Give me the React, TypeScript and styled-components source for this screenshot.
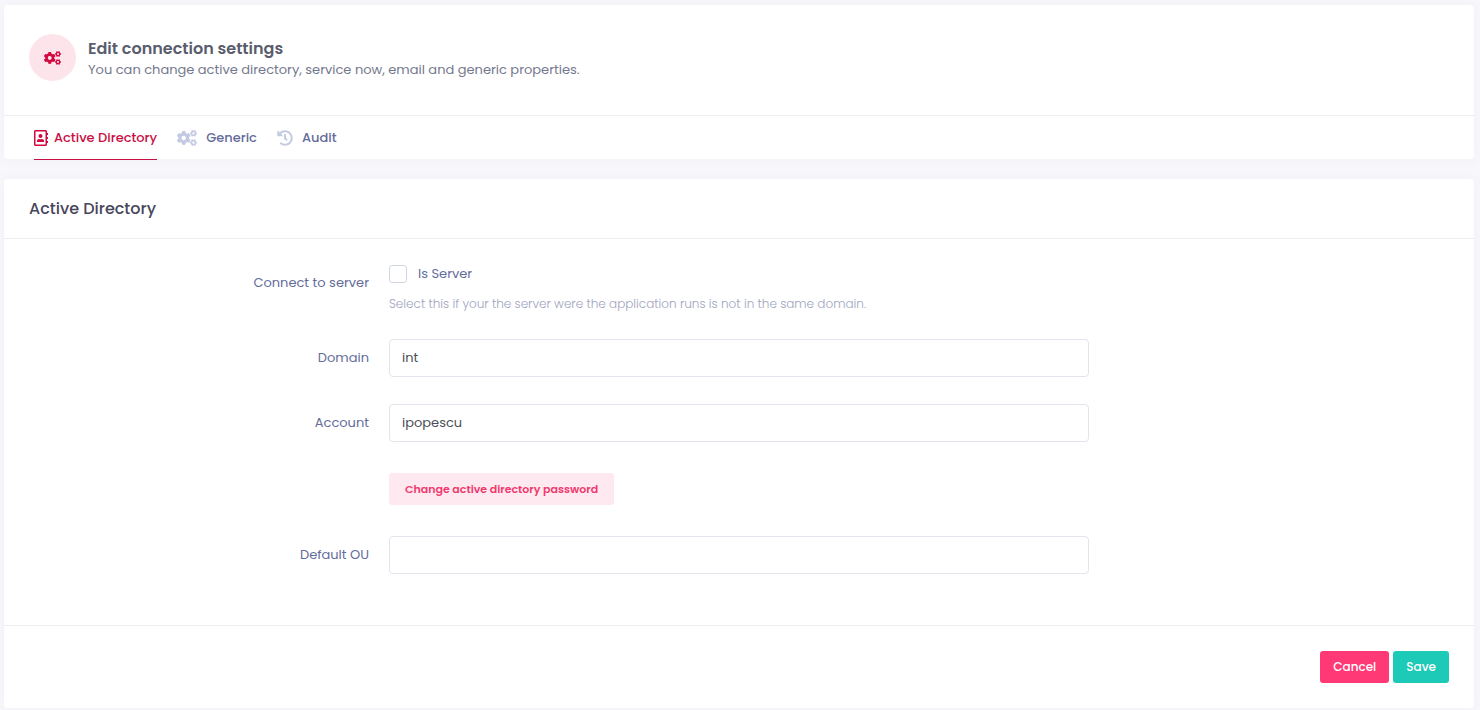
import React from "react";
import styled, { createGlobalStyle, css } from "styled-components";
import { FaCogs, FaHistory, FaRegAddressBook } from "react-icons/fa";

const GlobalStyle = createGlobalStyle`
  *, *::before, *::after { box-sizing: border-box; }
  body {
    margin: 0;
    background: #f8f8fc;
    color: #646c9a;
    font-family: Poppins, Inter, sans-serif;
    font-size: 13px;
    line-height: 20px;
  }
  button, input { font: inherit; }
`;

const Page = styled.main`
  display: flex;
  flex-direction: column;
  gap: 20px;
  padding: 5px 6px 2px 4px;
`;

const Card = styled.section`
  background: #fff;
  border-radius: 4px;
  box-shadow: 0 0 13px rgba(82, 63, 105, 0.05);
`;

const Intro = styled.header`
  display: flex;
  align-items: flex-start;
  gap: 12px;
  padding: 29px 25px 34px;
  border-bottom: 1px solid #ebedf2;
`;

const IconCircle = styled.span`
  display: flex;
  align-items: center;
  justify-content: center;
  width: 47px;
  height: 47px;
  border-radius: 50%;
  background: #fde4ea;
  color: #d3083f;

  svg {
    width: 17px;
    height: 14px;
  }
`;

const IntroText = styled.div`
  padding-top: 4px;
`;

const IntroTitle = styled.h1`
  margin: 0;
  color: #595d6e;
  font-size: 16px;
  font-weight: 600;
  line-height: 22px;
`;

const IntroNote = styled.p`
  margin: 0;
  color: #74788d;
`;

const Tabs = styled.nav`
  display: flex;
  gap: 20px;
  padding: 0 30px;
`;

const Tab = styled.a<{ $active?: boolean; $iconWidth: number }>`
  display: flex;
  align-items: center;
  gap: ${(p) => (p.$active ? 6 : 9)}px;
  height: 44px;
  margin-bottom: -1px;
  border-bottom: 1px solid ${(p) => (p.$active ? "#c80f45" : "transparent")};
  color: ${(p) => (p.$active ? "#c80f45" : "#646c9a")};
  font-weight: 500;
  text-decoration: none;

  svg {
    flex: none;
    width: ${(p) => p.$iconWidth}px;
    height: 16px;
    color: ${(p) => (p.$active ? "#d3083f" : "#c5cae3")};
  }
`;

const CardHead = styled.header`
  padding: 18px 25px 17px;
  border-bottom: 1px solid #ebedf2;
`;

const CardTitle = styled.h2`
  margin: 0;
  color: #48465b;
  font-size: 16px;
  font-weight: 500;
  line-height: 24px;
`;

const Fields = styled.div`
  display: flex;
  flex-direction: column;
  gap: 27px;
  padding: 25px 15px 51px;
`;

const Row = styled.div`
  display: grid;
  grid-template-columns: 3fr 6fr 3fr;
`;

const rowLabel = css`
  padding: 9px 10px;
  text-align: right;
`;

const Label = styled.label`
  ${rowLabel}
`;

const GroupLabel = styled.span`
  ${rowLabel}
`;

const Cell = styled.div`
  grid-column: 2;
  padding: 0 10px;
`;

const TextInput = styled.input`
  display: block;
  width: 100%;
  height: 38px;
  padding: 0 12px;
  border: 1px solid #e2e5ec;
  border-radius: 4px;
  background: #fff;
  color: #495057;
  outline: none;
`;

const CheckLabel = styled.label`
  display: flex;
  align-items: center;
  gap: 11px;
`;

const Checkbox = styled.input`
  appearance: none;
  width: 18px;
  height: 18px;
  margin: 0;
  border: 1px solid #d1d7e2;
  border-radius: 3px;
  background: #fff;

  &:checked {
    background: #ff3975;
  }
`;

const Hint = styled.p`
  margin: 11px 0 0;
  color: #a0a4c0;
  font-size: 12px;
  font-weight: 300;
  line-height: 17px;
`;

const Button = styled.button<{ $tone: "soft" | "danger" | "success" }>`
  height: 32px;
  padding: 0 ${(p) => (p.$tone === "soft" ? 16 : 13)}px;
  border: 0;
  border-radius: 3px;
  font-size: ${(p) => (p.$tone === "soft" ? 11 : 12)}px;
  font-weight: ${(p) => (p.$tone === "soft" ? 600 : 500)};
  color: ${(p) => (p.$tone === "soft" ? "#f0396e" : "#fff")};
  background: ${(p) => ({ soft: "#ffe9f0", danger: "#ff3975", success: "#1dc9b7" })[p.$tone]};
`;

const ButtonCell = styled(Cell)`
  padding-top: 4px;
  padding-bottom: 4px;
`;

const Footer = styled.footer`
  display: flex;
  justify-content: flex-end;
  gap: 4px;
  padding: 25px;
  border-top: 1px solid #ebedf2;
`;

export default function App() {
  return (
    <>
      <GlobalStyle />
      <Page>
        <Card>
          <Intro>
            <IconCircle>
              <FaCogs />
            </IconCircle>
            <IntroText>
              <IntroTitle>Edit connection settings</IntroTitle>
              <IntroNote>You can change active directory, service now, email and generic properties.</IntroNote>
            </IntroText>
          </Intro>
          <Tabs>
            <Tab href="#active-directory" $active $iconWidth={14} aria-current="page">
              <FaRegAddressBook />
              Active Directory
            </Tab>
            <Tab href="#generic" $iconWidth={20}>
              <FaCogs />
              Generic
            </Tab>
            <Tab href="#audit" $iconWidth={16}>
              <FaHistory />
              Audit
            </Tab>
          </Tabs>
        </Card>

        <Card as="form" onSubmit={(e: React.FormEvent) => e.preventDefault()}>
          <CardHead>
            <CardTitle>Active Directory</CardTitle>
          </CardHead>
          <Fields>
            <Row role="group" aria-labelledby="connect-label">
              <GroupLabel id="connect-label">Connect to server</GroupLabel>
              <Cell>
                <CheckLabel htmlFor="is-server">
                  <Checkbox id="is-server" type="checkbox" aria-describedby="is-server-hint" />
                  Is Server
                </CheckLabel>
                <Hint id="is-server-hint">
                  Select this if your the server were the application runs is not in the same domain.
                </Hint>
              </Cell>
            </Row>
            <Row>
              <Label htmlFor="domain">Domain</Label>
              <Cell>
                <TextInput id="domain" type="text" defaultValue="int" />
              </Cell>
            </Row>
            <Row>
              <Label htmlFor="account">Account</Label>
              <Cell>
                <TextInput id="account" type="text" defaultValue="ipopescu" />
              </Cell>
            </Row>
            <Row>
              <ButtonCell>
                <Button type="button" $tone="soft">
                  Change active directory password
                </Button>
              </ButtonCell>
            </Row>
            <Row>
              <Label htmlFor="default-ou">Default OU</Label>
              <Cell>
                <TextInput id="default-ou" type="text" />
              </Cell>
            </Row>
          </Fields>
          <Footer>
            <Button type="button" $tone="danger">
              Cancel
            </Button>
            <Button type="submit" $tone="success">
              Save
            </Button>
          </Footer>
        </Card>
      </Page>
    </>
  );
}
